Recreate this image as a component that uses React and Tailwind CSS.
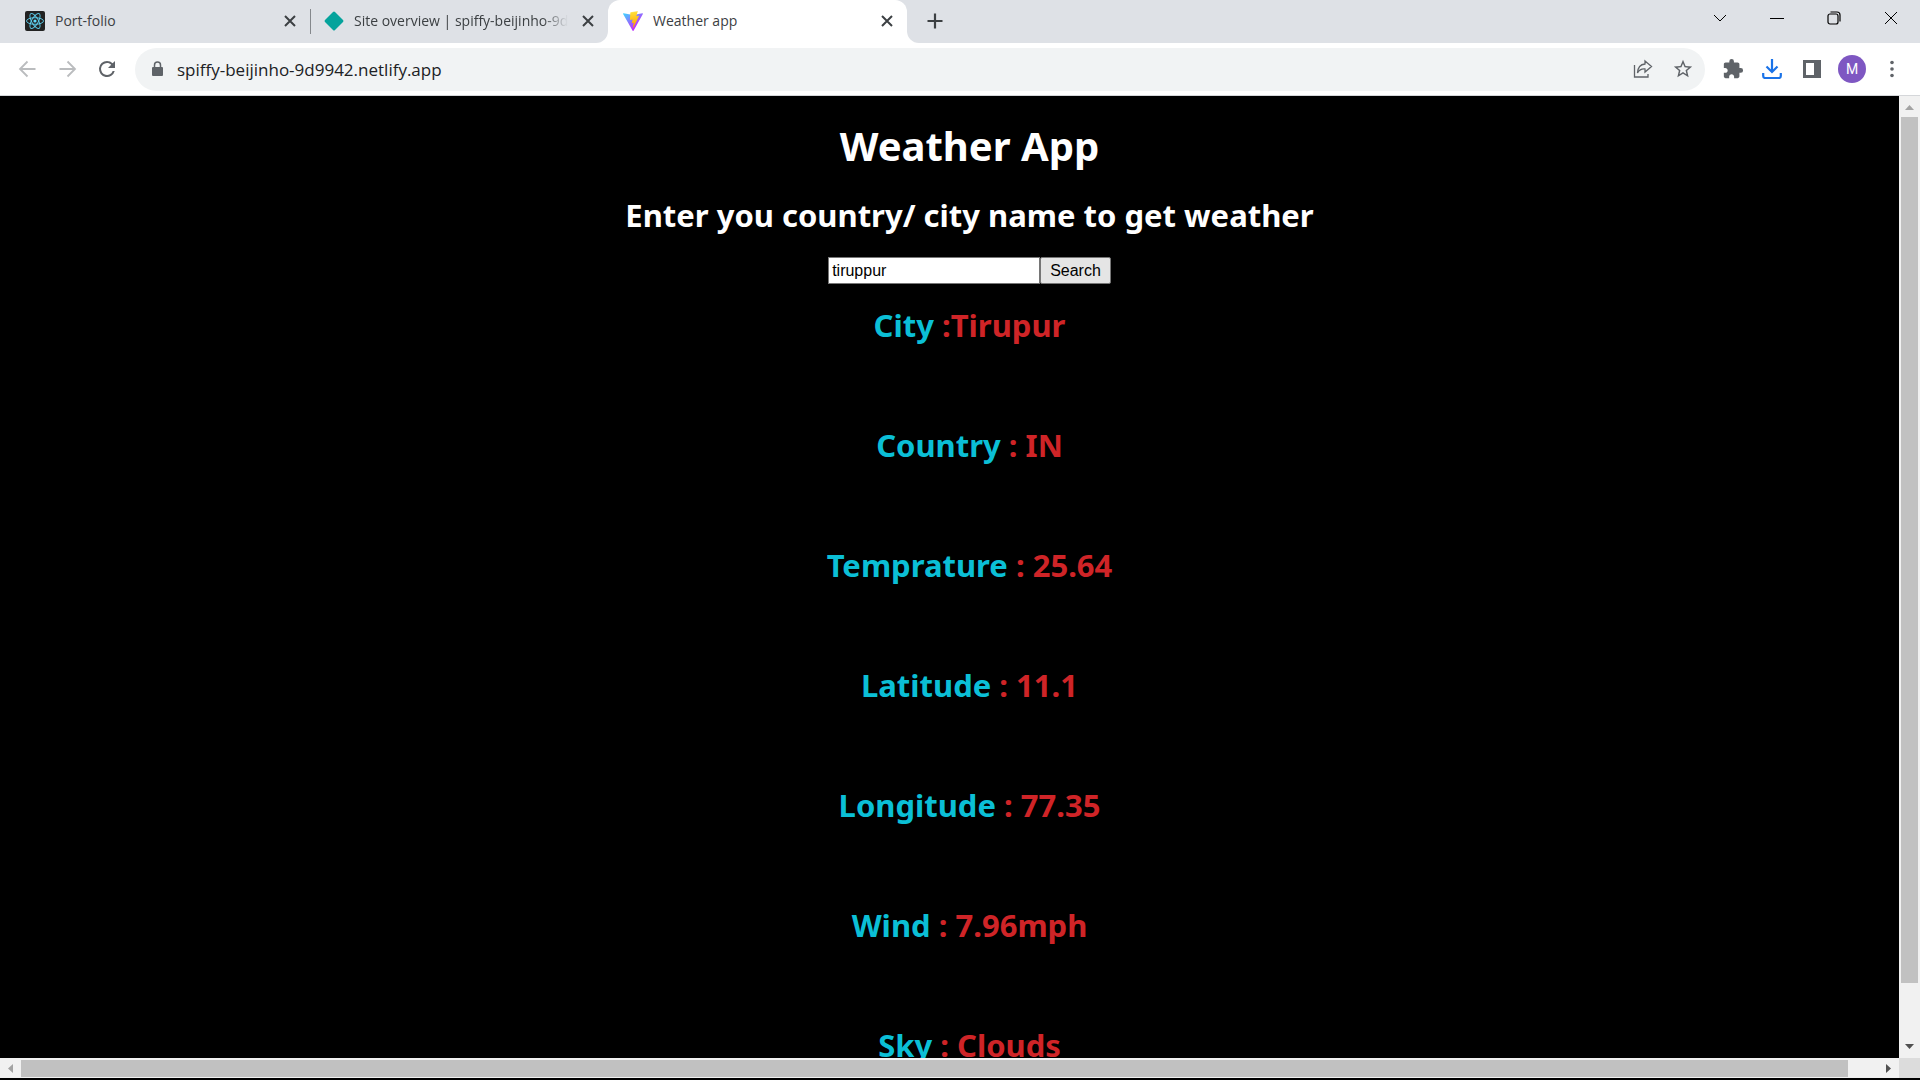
import React from "react";

const readings = [
  { label: "City", value: ":Tirupur" },
  { label: "Country", value: ": IN" },
  { label: "Temprature", value: ": 25.64" },
  { label: "Latitude", value: ": 11.1" },
  { label: "Longitude", value: ": 77.35" },
  { label: "Wind", value: ": 7.96mph" },
  { label: "Sky", value: ": Clouds" },
];

function ReactLogo() {
  return (
    <svg viewBox="0 0 20 20" className="size-5 shrink-0" aria-hidden="true">
      <rect width="20" height="20" rx="2" fill="#222" />
      <g fill="none" stroke="#61dafb" strokeOpacity=".85" strokeWidth="1">
        <ellipse cx="10" cy="10" rx="8.5" ry="3.300" />
        <ellipse cx="10" cy="10" rx="8.5" ry="3.300" transform="rotate(60 10 10)" />
        <ellipse cx="10" cy="10" rx="8.5" ry="3.300" transform="rotate(120 10 10)" />
      </g>
      <circle cx="10" cy="10" r="1.600" fill="#61dafb" />
    </svg>
  );
}

function NetlifyLogo() {
  return (
    <svg viewBox="0 0 20 20" className="size-5 shrink-0" aria-hidden="true">
      <path d="M9 1Q10 0 11 1L19 9Q20 10 19 11L11 19Q10 20 9 19L1 11Q0 10 1 9Z" fill="#05a39c" />
    </svg>
  );
}

function ViteLogo() {
  return (
    <svg viewBox="0 0 256 257" className="size-5 shrink-0" aria-hidden="true">
      <defs>
        <linearGradient id="funnel" x1="-.828%" x2="57.636%" y1="7.652%" y2="78.411%">
          <stop offset="0%" stopColor="#41D1FF" />
          <stop offset="100%" stopColor="#BD34FE" />
        </linearGradient>
        <linearGradient id="bolt" x1="43.376%" x2="50.316%" y1="2.242%" y2="89.03%">
          <stop offset="0%" stopColor="#FFEA83" />
          <stop offset="8.333%" stopColor="#FFDD35" />
          <stop offset="100%" stopColor="#FFA800" />
        </linearGradient>
      </defs>
      <path fill="url(#funnel)" d="M255.153 37.938L134.897 252.976c-2.483 4.44-8.862 4.466-11.382.048L.875 37.958c-2.746-4.814 1.371-10.646 6.827-9.67l120.385 21.517a6.537 6.537 0 0 0 2.322-.004l117.867-21.483c5.438-.991 9.574 4.796 6.877 9.62Z" />
      <path fill="url(#bolt)" d="M185.432.063L96.44 17.501a3.268 3.268 0 0 0-2.634 3.014l-5.474 92.456a3.268 3.268 0 0 0 3.997 3.378l24.777-5.718c2.318-.535 4.413 1.507 3.936 3.838l-7.361 36.047c-.495 2.426 1.782 4.5 4.151 3.78l15.304-4.649c2.372-.72 4.652 1.36 4.15 3.788l-11.698 56.621c-.732 3.542 3.979 5.473 5.943 2.437l1.313-2.028l72.516-144.72c1.215-2.423-.88-5.186-3.54-4.672l-25.505 4.922c-2.396.462-4.435-1.77-3.759-4.114l16.646-57.705c.677-2.35-1.37-4.583-3.769-4.113Z" />
    </svg>
  );
}

function CloseTab({ title }) {
  return (
    <button type="button" aria-label={"Close " + title} className="flex size-5 shrink-0 items-center justify-center">
      <svg viewBox="0 0 20 20" className="size-5" fill="none" stroke="#3c4043" strokeWidth="2">
        <path d="M5 5 15 15M15 5 5 15" />
      </svg>
    </button>
  );
}

function TabStrip() {
  return (
    <header className="flex h-[43px] shrink-0 items-stretch bg-[#dee1e6] text-sm text-[#3c4043]">
      <div className="flex w-[310px] items-center gap-2.5 pb-px pl-[25px] pr-2.5">
        <ReactLogo />
        <span className="min-w-0 flex-1 truncate">Port-folio</span>
        <CloseTab title="Port-folio" />
      </div>
      <div className="my-[9px] w-px bg-[#85888c]" />
      <div className="flex w-[297px] bg-white">
        <div className="flex min-w-0 flex-1 items-center gap-2.5 rounded-br-xl bg-[#dee1e6] pb-px pl-[13px] pr-2.5">
          <NetlifyLogo />
          <span className="min-w-0 flex-1 overflow-hidden whitespace-nowrap [mask-image:linear-gradient(to_right,black_88%,transparent)]">
            Site overview | spiffy-beijinho-9d9942
          </span>
          <CloseTab title="Site overview" />
        </div>
      </div>
      <div className="flex w-[299px] items-center gap-2.5 rounded-t-xl bg-white pb-px pl-[15px] pr-2.5">
        <ViteLogo />
        <span className="min-w-0 flex-1 truncate">Weather app</span>
        <CloseTab title="Weather app" />
      </div>
      <div className="flex flex-1 bg-white">
        <div className="flex flex-1 items-center rounded-bl-xl bg-[#dee1e6] pb-px pl-[18px]">
          <button type="button" aria-label="New tab" className="size-5">
            <svg viewBox="0 0 20 20" className="size-5" fill="none" stroke="#3c4043" strokeWidth="2.200">
              <path d="M10 2.500V17.500M2.500 10H17.500" />
            </svg>
          </button>
        </div>
      </div>
      <div className="flex items-start text-black">
        <button type="button" aria-label="Search tabs" className="flex h-9 w-[57px] items-center justify-center">
          <svg viewBox="0 0 14 14" className="size-3.5" fill="none" stroke="currentColor"><path d="M1 4 7 10 13 4" /></svg>
        </button>
        <button type="button" aria-label="Minimize" className="flex h-9 w-[57px] items-center justify-center">
          <svg viewBox="0 0 14 14" className="size-3.5" fill="none" stroke="currentColor"><path d="M0 7.500H14" /></svg>
        </button>
        <button type="button" aria-label="Restore" className="flex h-9 w-[57px] items-center justify-center">
          <svg viewBox="0 0 14 14" className="size-3.5" fill="none" stroke="currentColor" strokeWidth="1.200">
            <rect x="1" y="3" width="10" height="10" rx="2" />
            <path d="M3.500 1H10Q13 1 13 4V10.500" />
          </svg>
        </button>
        <button type="button" aria-label="Close window" className="flex h-9 w-[58px] items-center justify-center">
          <svg viewBox="0 0 14 14" className="size-3.5" fill="none" stroke="currentColor"><path d="M1 1 13 13M13 1 1 13" /></svg>
        </button>
      </div>
    </header>
  );
}

function Toolbar() {
  return (
    <nav className="flex h-[53px] shrink-0 items-center border-b border-[#d5d7da] bg-white pr-[18px] pl-[15px] text-[#5f6368]">
      <div className="flex w-[120px] items-center gap-4">
        <button type="button" aria-label="Back" className="size-6 text-[#babcbe]">
          <svg viewBox="0 0 24 24" className="size-6" fill="none" stroke="currentColor" strokeWidth="1.800"><path d="M20.500 12H5M12.500 4.500 5 12 12.500 19.500" /></svg>
        </button>
        <button type="button" aria-label="Forward" className="size-6 text-[#babcbe]">
          <svg viewBox="0 0 24 24" className="size-6" fill="none" stroke="currentColor" strokeWidth="1.800"><path d="M4.500 12H20M12.500 4.500 20 12 12.500 19.500" /></svg>
        </button>
        <button type="button" aria-label="Reload" className="size-6">
          <svg viewBox="0 0 24 24" className="size-6" fill="currentColor"><path d="M17.650 6.350A7.950 7.950 0 0 0 12 4a8 8 0 1 0 7.730 10h-2.080A6 6 0 1 1 12 6c1.660 0 3.140.690 4.220 1.780L13 11h7V4z" /></svg>
        </button>
      </div>
      <div className="flex h-[43px] flex-1 items-center rounded-full bg-[#f1f3f4] pr-[11px] pl-[14px]">
        <svg viewBox="0 0 16 16" className="size-4 shrink-0" aria-hidden="true">
          <rect x="3" y="6" width="11" height="9" rx="1" fill="#5f6368" />
          <path d="M5.500 6V4a3 3 0 0 1 6 0v2" fill="none" stroke="#5f6368" strokeWidth="1.500" />
        </svg>
        <input
          aria-label="Address"
          defaultValue="spiffy-beijinho-9d9942.netlify.app"
          className="ml-3 h-8 min-w-0 flex-1 bg-transparent text-[17px] text-[#202124] outline-none"
        />
        <button type="button" aria-label="Share" className="mr-[19px] size-5">
          <svg viewBox="0 0 20 20" className="size-5" fill="none" stroke="currentColor" strokeWidth="1.300">
            <path d="M1.500 6V18H15V15M12 2 18.500 7.500 12 13V10Q7 9.500 4.500 14Q5 5.500 12 5Z" />
          </svg>
        </button>
        <button type="button" aria-label="Bookmark" className="size-[22px]">
          <svg viewBox="0 0 24 24" className="size-[22px]" fill="currentColor"><path d="m22 9.240-7.190-.620L12 2 9.190 8.630 2 9.240l5.460 4.730L5.820 21 12 17.270 18.180 21l-1.630-7.030zM12 15.400l-3.760 2.270 1-4.280-3.320-2.880 4.380-.380L12 6.100l1.710 4.040 4.380.380-3.320 2.880 1 4.280z" /></svg>
        </button>
      </div>
      <div className="ml-[17px] flex items-center gap-4">
        <div className="flex items-center gap-5">
          <div className="flex items-center gap-[18px]">
            <button type="button" aria-label="Extensions" className="size-[22px]">
              <svg viewBox="0 0 24 24" className="size-[22px]" fill="currentColor"><path d="M20.500 11H19V7c0-1.100-.9-2-2-2h-4V3.500a2.500 2.500 0 0 0-5 0V5H4c-1.100 0-1.990.9-1.990 2v3.800H3.500c1.490 0 2.700 1.210 2.700 2.700s-1.210 2.700-2.700 2.700H2V20c0 1.100.9 2 2 2h3.800v-1.500c0-1.490 1.210-2.700 2.700-2.700s2.700 1.210 2.700 2.700V22H17c1.100 0 2-.9 2-2v-4h1.500a2.500 2.500 0 0 0 0-5" /></svg>
            </button>
            <button type="button" aria-label="Downloads" className="size-5">
              <svg viewBox="0 0 20 20" className="size-5" fill="none" stroke="#1a73e8" strokeWidth="2.200"><path d="M10 0V13M4.500 7.500 10 13 15.500 7.500M1.200 14V17Q1.200 19 3.200 19H16.800Q18.800 19 18.800 17V14" /></svg>
            </button>
          </div>
          <button type="button" aria-label="Side panel" className="size-5">
            <svg viewBox="0 0 20 20" className="size-5"><path fillRule="evenodd" d="M1 1H19V19H1ZM4 4V16H12V4Z" fill="currentColor" /></svg>
          </button>
        </div>
        <button type="button" aria-label="Profile" className="size-7 rounded-full bg-[#7e57c2] font-[Roboto,sans-serif] text-sm text-white">M</button>
        <button type="button" aria-label="Menu" className="size-5">
          <svg viewBox="0 0 20 20" className="size-5" fill="currentColor"><circle cx="10" cy="3.500" r="1.800" /><circle cx="10" cy="10" r="1.800" /><circle cx="10" cy="16.500" r="1.800" /></svg>
        </button>
      </div>
    </nav>
  );
}

function WeatherPage() {
  return (
    <main className="min-h-0 overflow-hidden bg-black pl-10 text-center font-['Noto_Sans',sans-serif] font-bold text-white">
      <h1 className="mt-[23px] text-[40px] leading-[54px]">Weather App</h1>
      <h2 className="mt-[22px] text-[31px] leading-10">Enter you country/ city name to get weather</h2>
      <form className="mt-[22px] flex justify-center font-['Liberation_Sans',sans-serif] text-base font-normal text-black" onSubmit={(e) => e.preventDefault()}>
        <input aria-label="City or country" defaultValue="tiruppur" className="h-[27px] w-[212px] border border-[#767676] bg-white px-[3px]" />
        <button type="submit" className="h-[27px] rounded-xs border border-[#767676] bg-[#e5e5e5] px-[9px]">Search</button>
      </form>
      <div className="mt-[21px] flex flex-col gap-20 text-[31px] leading-10">
        {readings.map((r) => (
          <h2 key={r.label} className="text-[#cf2427]">
            <span className="text-[#0bbfd6]">{r.label}</span> {r.value}
          </h2>
        ))}
      </div>
    </main>
  );
}

function VerticalScrollbar() {
  return (
    <div className="flex w-[21px] flex-col bg-[#f1f1f1]">
      <svg viewBox="0 0 21 21" className="h-[21px] shrink-0" fill="#a3a3a3"><path d="M6 14 10.500 9 15 14Z" /></svg>
      <div className="mx-0.5 h-[90%] bg-[#c1c1c1]" />
      <div className="flex-1" />
      <svg viewBox="0 0 21 21" className="h-[21px] shrink-0" fill="#505050"><path d="M6 7 10.500 12 15 7Z" /></svg>
    </div>
  );
}

function HorizontalScrollbar() {
  return (
    <div className="flex h-[22px] shrink-0 border-b-2 border-black bg-[#f1f1f1]">
      <svg viewBox="0 0 21 20" className="w-[21px] shrink-0" fill="#a3a3a3"><path d="M13 6 8 10.500 13 15Z" /></svg>
      <div className="mt-0.5 mb-px w-[1827px] bg-[#c1c1c1]" />
      <div className="flex-1" />
      <svg viewBox="0 0 21 20" className="w-[21px] shrink-0" fill="#505050"><path d="M8 6 13 10.500 8 15Z" /></svg>
      <div className="w-[21px] shrink-0 bg-[#dcdcdc]" />
    </div>
  );
}

export default function App() {
  return (
    <div className="flex h-screen flex-col overflow-hidden bg-black font-['Open_Sans',sans-serif]">
      <TabStrip />
      <Toolbar />
      <div className="grid min-h-0 flex-1 grid-cols-[1fr_21px]">
        <WeatherPage />
        <VerticalScrollbar />
      </div>
      <HorizontalScrollbar />
    </div>
  );
}
